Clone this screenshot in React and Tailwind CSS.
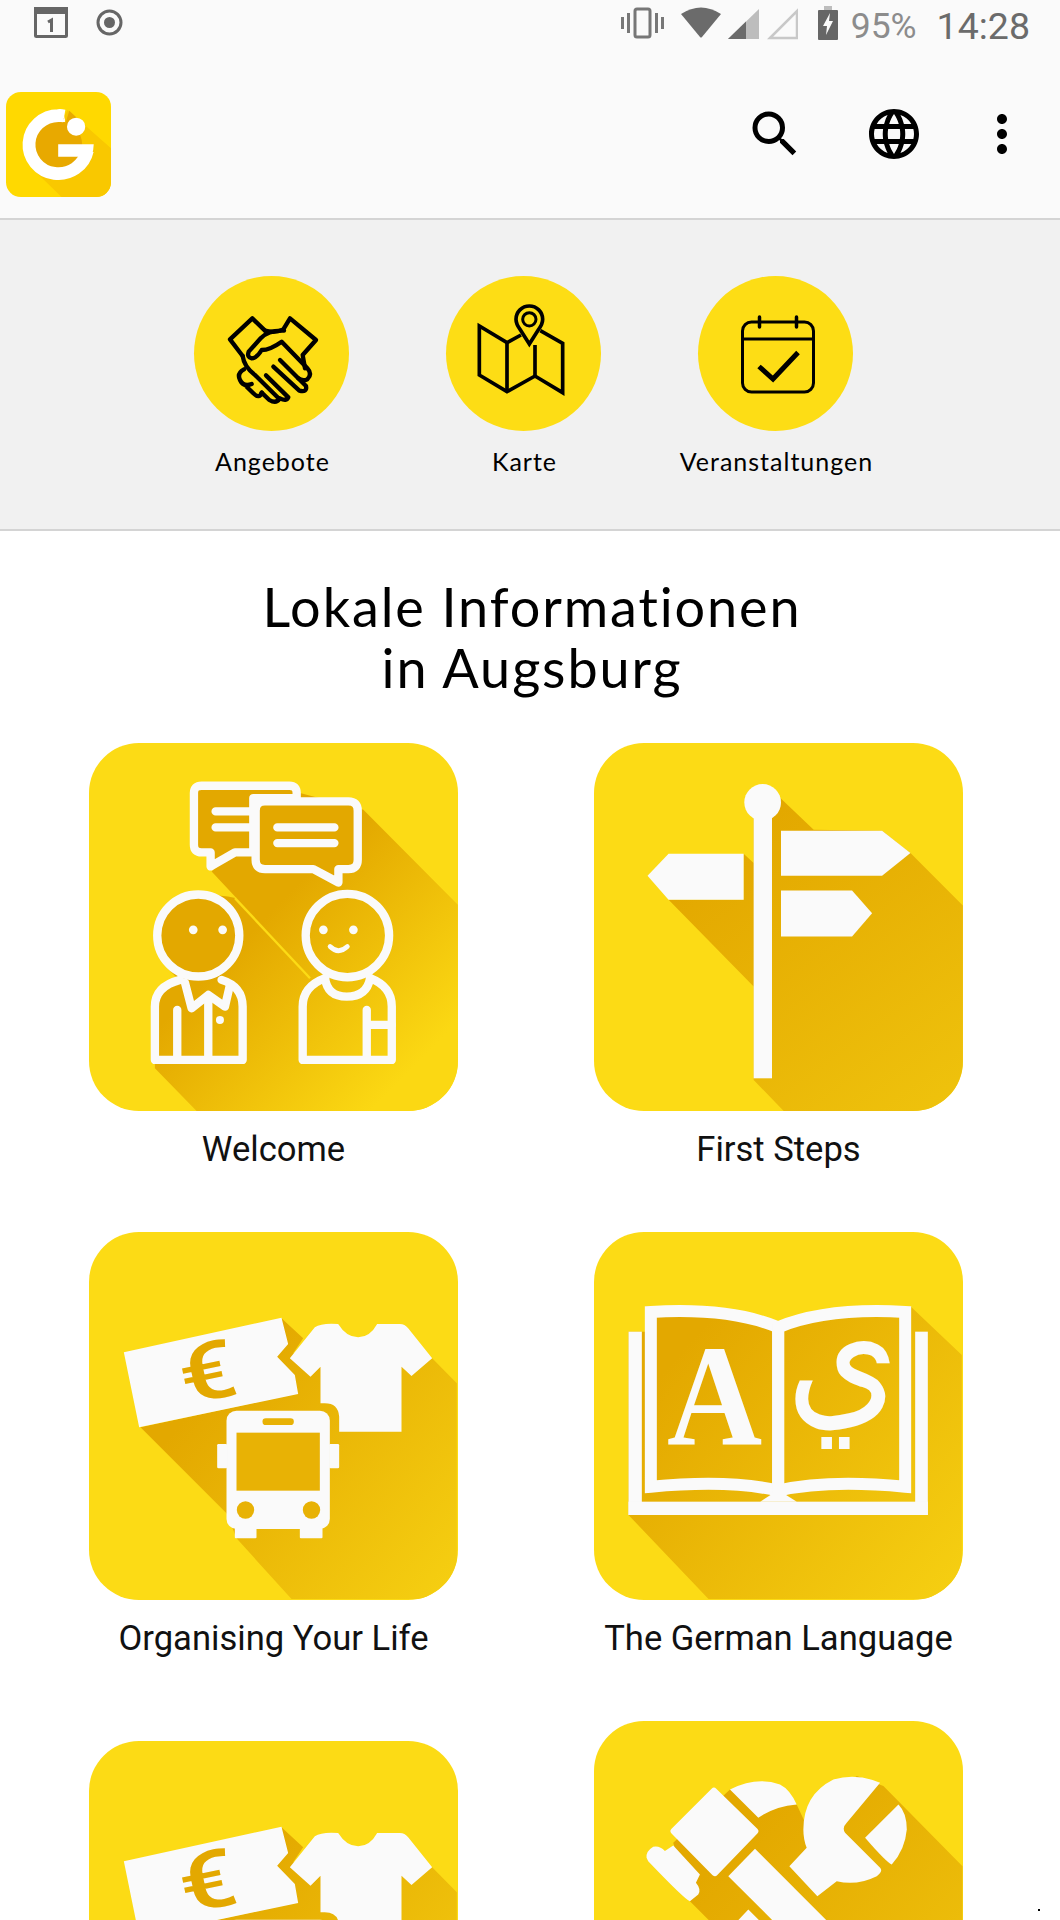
import React from "react";
import { MdSearch, MdLanguage, MdMoreVert } from "react-icons/md";

const WHITE = "#fafafa";

function ShadowGradient({ id, x1, y1, x2, y2, from = "#e3a800", to = "#f6d012" }) {
  return (
    <defs>
      <linearGradient id={id} gradientUnits="userSpaceOnUse" x1={x1} y1={y1} x2={x2} y2={y2}>
        <stop offset="0" stopColor={from} />
        <stop offset="1" stopColor={to} />
      </linearGradient>
    </defs>
  );
}

function StatusBar() {
  return (
    <div className="flex h-[46px] items-start justify-between pl-[34px] pr-[30px] pt-[7px]">
      <div className="flex items-start gap-[27px]">
        {/* calendar */}
        <svg width="35" height="32" viewBox="0 0 35 32">
          <rect x="1.500" y="1.500" width="31" height="28" rx="1" fill="none" stroke="#666" strokeWidth="3" />
          <rect x="0" y="0" width="34" height="7" fill="#666" />
          <path d="M14 15 l3.500 -2 v12" fill="none" stroke="#666" strokeWidth="3" />
        </svg>
        {/* record */}
        <svg width="27" height="27" viewBox="0 0 27 27" className="mt-[2px]">
          <circle cx="13.500" cy="13.500" r="11.500" fill="none" stroke="#666" strokeWidth="3" />
          <circle cx="13.500" cy="13.500" r="5.500" fill="#666" />
        </svg>
      </div>
      <div className="flex items-start">
        {/* vibrate */}
        <svg width="43" height="32" viewBox="0 0 43 32" className="mr-[17px]">
          <rect x="14" y="2" width="15" height="28" rx="2" fill="none" stroke="#777" strokeWidth="3" />
          <rect x="0" y="10" width="3" height="12" fill="#777" />
          <rect x="6" y="6" width="3" height="20" fill="#777" />
          <rect x="34" y="6" width="3" height="20" fill="#777" />
          <rect x="40" y="10" width="3" height="12" fill="#777" />
        </svg>
        {/* wifi */}
        <svg width="40" height="32" viewBox="0 0 40 32" className="mr-[7px]">
          <path d="M0 7 Q20 -6 40 7 L21 30 Q20 31 19 30 Z" fill="#6b6b6b" />
        </svg>
        {/* signal sim 1 */}
        <svg width="31" height="32" viewBox="0 0 31 32" className="mt-[1px] mr-[8px]">
          <path d="M0 31 L31 1 V31 Z" fill="#bdbdbd" />
          <path d="M0 31 L18 13.500 V31 Z" fill="#6b6b6b" />
        </svg>
        {/* signal sim 2 */}
        <svg width="31" height="32" viewBox="0 0 31 32" className="mt-[1px] mr-[20px]">
          <path d="M3 30 L30 3 V30 Z" fill="none" stroke="#c8c8c8" strokeWidth="2.500" />
        </svg>
        {/* battery */}
        <svg width="20" height="34" viewBox="0 0 20 34" className="mt-[-1px] mr-[13px]">
          <rect x="6" y="0" width="8" height="4" fill="#bdbdbd" />
          <rect x="0" y="4" width="20" height="30" rx="1" fill="#666" />
          <path d="M12 7 L5 20 H9 L8 29 L15 15 H11 Z" fill={WHITE} />
        </svg>
        <span className="mt-[-1px] mr-[20px] font-['Roboto',sans-serif] text-[35.500px] leading-[40px] text-[#8c8c8c]">95%</span>
        <span className="mt-[-1px] font-['Roboto',sans-serif] text-[37.500px] leading-[40px] text-[#6b6b6b]">14:28</span>
      </div>
    </div>
  );
}

function Logo() {
  return (
    <svg width="105" height="105" viewBox="18 276 310 315" preserveAspectRatio="none" className="block">
      <rect x="18" y="276" width="310" height="315" rx="44" fill="#ffd900" />
      <clipPath id="logo-clip">
        <rect x="18" y="276" width="310" height="315" rx="44" />
      </clipPath>
      <g clipPath="url(#logo-clip)">
        <path d="M200 330 L328 445 V591 H182 L100 510 Z" fill="#f9c800" />
      </g>
      <circle cx="173" cy="434" r="70" fill="#e8a900" />
      <path d="M205 332 L250 375 L173 434 Z" fill="#e8a900" />
      <path d="M190 348 Q173 345 173 347 A87 87 0 1 0 258 452" fill="none" stroke="#fff" strokeWidth="38" />
      <path d="M172 433 H277 Q277 452 270 470 H172 Z" fill="#fff" />
      <circle cx="225" cy="380" r="27" fill="#fff" />
    </svg>
  );
}

function TopBar() {
  return (
    <div className="h-[218px] bg-[#fafafa]">
      <StatusBar />
      <div className="flex items-start pl-[6px] pt-[46px]">
        <Logo />
        <div className="ml-[634px] mt-[12px] flex text-black">
          <MdSearch size={60} />
          <MdLanguage size={60} className="ml-[59px]" />
          <MdMoreVert size={60} className="ml-[48px]" />
        </div>
      </div>
    </div>
  );
}

function HandshakeIcon() {
  return (
    <svg width="110" height="110" viewBox="0 0 330 330" fill="none" stroke="#000" strokeWidth="13" strokeLinejoin="round" strokeLinecap="round">
      <path d="M68 168 L30 118 L97 55 L135 92" />
      <path d="M135 92 Q165 100 190 88 L210 55 L288 120 L248 165 L255 205" />
      <path d="M192 92 Q145 90 122 115 L86 155 Q80 172 95 175 Q110 175 125 150 Q150 150 185 125 L262 205 Q278 222 262 238 Q248 245 235 235" />
      <path d="M180 180 L258 258 Q262 278 238 272 L160 200" />
      <path d="M138 226 L205 292 Q200 305 180 295" />
      <path d="M68 168 Q72 200 105 225 L178 297 Q168 312 148 300 L125 278" />
      <path d="M125 278 Q118 298 100 280 L80 260 M95 252 Q70 262 60 240 Q50 220 72 208" />
    </svg>
  );
}

function MapIcon() {
  return (
    <svg width="110" height="110" viewBox="0 0 330 330" fill="none" stroke="#000" strokeWidth="11" strokeLinejoin="miter">
      <path d="M150 105 L108 128 L25 78 V225 L108 275 L192 228 L275 278 V130 L208 92" />
      <path d="M108 128 V275 M192 135 V228" />
      <path d="M175 132 L147 88 Q135 72 135 58 A40 40 0 0 1 215 58 Q215 72 203 88 Z" />
      <circle cx="175" cy="58" r="20" strokeWidth="9" />
    </svg>
  );
}

function CalendarIcon() {
  return (
    <svg width="84" height="110" viewBox="0 0 84 110" fill="none" stroke="#000" strokeLinecap="round">
      <rect x="6.500" y="22" width="71" height="70" rx="9" strokeWidth="3" />
      <path d="M6.500 39 H77.500" strokeWidth="3" />
      <path d="M23.500 17 V27 M60.500 17 V27" strokeWidth="3.500" />
      <path d="M23 66.500 L37 79 L62 52.500" strokeWidth="5" strokeLinecap="butt" />
    </svg>
  );
}

function QuickLink({ label, pad, children }) {
  return (
    <div className="flex w-[252px] flex-col items-center">
      <div className={`h-[155px] w-[155px] self-center rounded-full bg-[#fddd15] pt-[24px] ${pad}`}>{children}</div>
      <span className="mt-[16px] whitespace-nowrap pl-[3px] font-['Lato',sans-serif] text-[25px] leading-[28px] tracking-[1px] text-black">{label}</span>
    </div>
  );
}

function QuickLinks() {
  return (
    <div className="h-[313px] border-y-2 border-[#d4d4d4] bg-[#f1f1f1] pl-[145px] pt-[56px]">
      <div className="flex">
        <QuickLink label="Angebote" pad="pl-[26px]"><HandshakeIcon /></QuickLink>
        <QuickLink label="Karte" pad="pl-[25px]"><MapIcon /></QuickLink>
        <QuickLink label="Veranstaltungen" pad="pl-[38px]"><CalendarIcon /></QuickLink>
      </div>
    </div>
  );
}

function WelcomeArt() {
  return (
    <svg width="369" height="368" viewBox="28 40 1105 1103" className="block">
      <ShadowGradient id="g1" x1="560" y1="560" x2="1010" y2="1000" to="#fbd813" />
      <path d="M660 190 L850 240 L1133 525 V1143 H350 L225 1015 V830 Q225 770 300 750 Q232 700 232 617 Q232 494 355 494 Q420 494 470 505 L395 425 Z" fill="url(#g1)" />
      <path d="M465 505 L690 745" stroke="#fcdb15" strokeWidth="7" />
      <g fill="none" stroke={WHITE} strokeWidth="25" strokeLinecap="round" strokeLinejoin="round">
        <path d="M650 205 V190 Q650 168 628 168 H365 Q342 168 342 190 V345 Q342 368 365 368 H392 V410 L465 368 H520 V205 Z" fill="#e3a800" />
        <path d="M407 245 H520 M407 293 H520" />
        <path d="M555 215 H805 Q833 215 833 243 V390 Q833 418 805 418 H775 V458 L700 418 H555 Q527 418 527 390 V243 Q527 215 555 215 Z" fill="#e3a800" />
        <path d="M592 293 H763 M592 340 H763" />
        <circle cx="355" cy="617" r="123" />
        <path d="M300 750 Q225 770 225 830 V990 H488 V830 Q488 770 425 750" />
        <path d="M315 758 L335 835 L385 795 L435 830 L450 765" />
        <path d="M292 840 V990 M385 800 V990" />
        <circle cx="802" cy="617" r="125" />
        <path d="M735 745 Q668 770 668 830 V990 H935 V830 Q935 770 870 745" />
        <path d="M735 745 Q742 800 800 800 Q860 800 870 745" />
        <path d="M860 840 V990 M860 885 H935" />
      </g>
      <g fill={WHITE}>
        <circle cx="340" cy="600" r="13" />
        <circle cx="428" cy="600" r="13" />
        <circle cx="420" cy="870" r="12" />
        <circle cx="730" cy="600" r="13" />
        <circle cx="820" cy="600" r="13" />
      </g>
      <path d="M750 650 Q775 675 802 650" fill="none" stroke={WHITE} strokeWidth="14" strokeLinecap="round" />
    </svg>
  );
}

function SignpostArt() {
  return (
    <svg width="369" height="368" viewBox="42 40 1105 1103" className="block">
      <ShadowGradient id="g2" x1="520" y1="300" x2="1147" y2="1143" to="#efc30d" />
      <path d="M600 205 L700 300 L905 303 L990 370 L1147 527 V1143 H610 L520 1050 V770 L265 510 H490 V372 L520 400 V260 Z" fill="url(#g2)" />
      <g fill={WHITE}>
        <circle cx="547" cy="218" r="55" />
        <rect x="520" y="250" width="55" height="795" />
        <path d="M602 303 H905 L990 370 L905 438 H602 Z" />
        <path d="M602 482 H815 L875 550 L815 620 H602 Z" />
        <path d="M202 438 L265 372 H490 V510 H265 Z" />
      </g>
    </svg>
  );
}

function LifeArt({ id }) {
  return (
    <svg width="368" height="367" viewBox="28 36 1103 1101" className="block">
      <ShadowGradient id={id} x1="400" y1="500" x2="1131" y2="1137" to="#f6d012" />
      <path d="M605 295 L670 355 L640 400 L1057 415 L1131 490 V1137 H635 L470 955 L440 880 L182 622 L655 520 L590 410 Z" fill={`url(#${id})`} />
      <g fill={WHITE}>
        <path d="M132 397 L605 293 L625 372 L592 410 L645 465 L655 522 L178 622 Z" />
        <path d="M630 415 L705 322 Q725 308 775 312 Q800 352 835 352 Q870 352 892 312 H960 Q975 312 985 325 L1057 415 L995 468 L965 440 V635 H778 V590 Q775 550 735 550 H722 V440 L692 470 Z" />
        <rect x="440" y="572" width="310" height="355" rx="30" />
        <rect x="412" y="672" width="30" height="73" rx="4" />
        <rect x="748" y="672" width="30" height="73" rx="4" />
        <rect x="465" y="920" width="65" height="35" rx="3" />
        <rect x="660" y="920" width="68" height="35" rx="3" />
      </g>
      <g fill="#e8b205">
        <rect x="470" y="638" width="250" height="174" />
        <rect x="548" y="595" width="94" height="20" rx="10" />
        <circle cx="497" cy="870" r="26" />
        <circle cx="695" cy="870" r="26" />
      </g>
      <text x="0" y="85" textAnchor="middle" transform="translate(382 455) rotate(-12) scale(1.25 1)" className="font-['Roboto',sans-serif] font-medium" fontSize="240" fill="#e3a800">€</text>
    </svg>
  );
}

function BookArt() {
  return (
    <svg width="368" height="367" viewBox="42 36 1103 1101" className="block">
      <ShadowGradient id="g4" x1="300" y1="400" x2="1145" y2="1137" to="#f6d012" />
      <path d="M990 258 L1145 405 V1137 H385 L145 885 V335 H195 V258 Q450 262 594 305 Q740 262 990 258 Z" fill="url(#g4)" />
      <g fill="none" stroke={WHITE}>
        <path d="M212 800 V276 Q450 262 594 322 V812 Q450 778 212 800 Z" strokeWidth="36" />
        <path d="M975 800 V276 Q740 262 594 322 V812 Q740 778 975 800 Z" strokeWidth="36" />
      </g>
      <g fill={WHITE}>
        <rect x="145" y="335" width="40" height="550" />
        <rect x="1005" y="335" width="38" height="550" />
        <rect x="145" y="845" width="898" height="40" />
        <path d="M540 845 L594 810 L650 845 Z" />
      </g>
      <text x="0" y="0" textAnchor="middle" transform="translate(403 675) scale(0.92 1)" className="font-['Liberation_Serif',serif] font-bold" fontSize="430" fill={WHITE}>A</text>
      <text x="0" y="0" textAnchor="middle" transform="translate(787 568) scale(1.08 1.24)" className="font-['DejaVu_Sans',sans-serif]" fontSize="400" fill={WHITE}>ي</text>
    </svg>
  );
}

function ToolsArt() {
  return (
    <svg width="369" height="368" viewBox="13 5 1105 1103" className="block">
      <ShadowGradient id="g6" x1="500" y1="300" x2="1117" y2="900" to="#efc30d" />
      <path d="M250 370 L420 210 L620 255 L650 320 L800 170 L880 200 L1117 440 V1108 H860 L300 545 Z" fill="url(#g6)" />
      <g fill={WHITE}>
        <path d="M372 215 L495 335 L375 460 L252 335 Z" stroke={WHITE} strokeWidth="20" strokeLinejoin="round" />
        <path d="M420 210 Q500 170 570 195 Q600 210 620 255 Q555 260 505 295 Z" />
        <path d="M170 415 Q168 395 190 382 Q210 378 225 395 L250 378 L330 465 L318 490 Q335 510 325 525 L300 545 Q285 540 175 425 Z" />
        <path d="M415 470 L495 388 L1095 988 L1015 1070 Z" />
        <path d="M870 190 Q800 160 730 180 Q640 225 640 330 Q640 360 650 385 L598 440 L682 530 L740 485 Q800 500 860 470 Q880 455 870 445 L765 340 Q755 325 770 310 Z" />
        <path d="M925 255 Q950 280 950 330 Q945 390 905 435 Q890 430 825 355 Z" />
        <path d="M475 570 L560 655 L400 815 L320 735 Z" />
      </g>
    </svg>
  );
}

function Tile({ label, art, className = "" }) {
  return (
    <div className={`h-[489px] w-[369px] ${className}`}>
      <div className="h-[368px] w-[369px] overflow-hidden rounded-[50px] bg-[#fcdb15]">{art}</div>
      {label && (
        <p className="mt-[18px] whitespace-nowrap text-center font-['Roboto',sans-serif] text-[34.600px] leading-[40px] text-[#111]">{label}</p>
      )}
    </div>
  );
}

export default function App() {
  return (
    <div className="relative h-[1920px] w-[1060px] overflow-hidden bg-white">
      <TopBar />
      <QuickLinks />
      <h1 className="pl-[4px] pt-[45px] text-center font-['Lato',sans-serif] text-[54px] font-normal leading-[61px] tracking-[1.9px] text-black">
        Lokale Informationen
        <br />
        in Augsburg
      </h1>
      <div className="mt-[45px] flex gap-[136px] pl-[89px]">
        <div className="flex flex-col">
          <Tile label="Welcome" art={<WelcomeArt />} />
          <Tile label="Organising Your Life" art={<LifeArt id="g3" />} />
          <Tile art={<LifeArt id="g5" />} className="mt-[20px]" />
        </div>
        <div className="flex flex-col">
          <Tile label="First Steps" art={<SignpostArt />} />
          <Tile label="The German Language" art={<BookArt />} />
          <Tile art={<ToolsArt />} />
        </div>
      </div>
      <div className="absolute left-[1038px] top-[1909px] h-[2px] w-[2px] bg-black" />
    </div>
  );
}
